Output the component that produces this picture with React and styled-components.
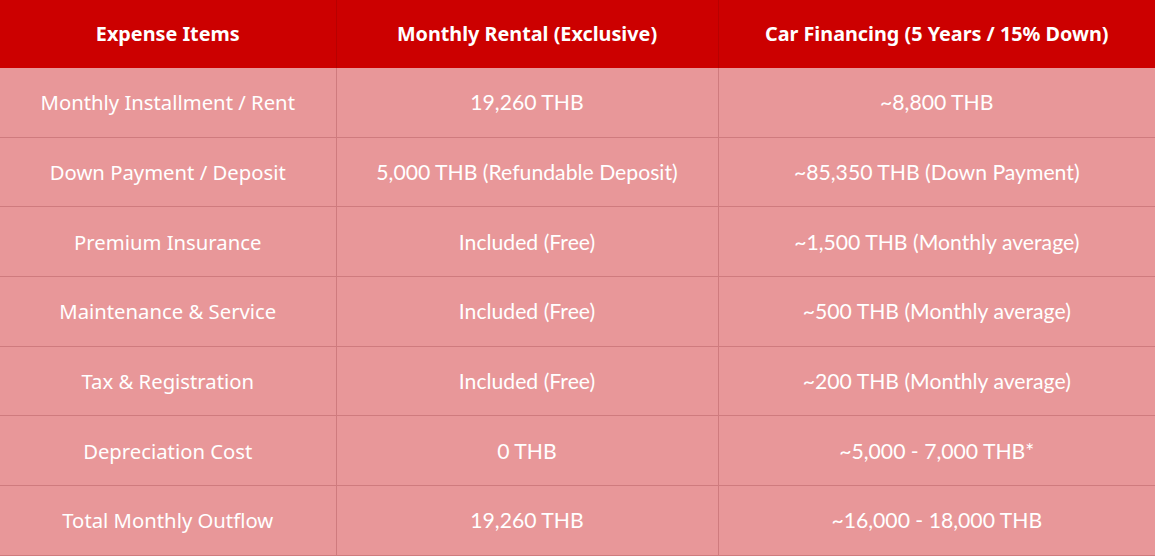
import styled, { createGlobalStyle } from "styled-components";

const GlobalStyle = createGlobalStyle`
  html, body {
    margin: 0;
    padding: 0;
    background: #e89799;
  }
`;

/* Whole comparison table */
const Table = styled.table`
  width: 1155px;
  border-collapse: collapse;
  table-layout: fixed;
  color: #ffffff;
  line-height: 24px;
`;

const Col = styled.col`
  width: ${(p) => p.w}px;
`;

/* Red header cells */
const HeadCell = styled.th`
  height: 68px;
  padding: 0;
  background-color: #cc0000;
  border-right: 1px solid #b80000;
  font-family: "Noto Sans", "Open Sans", sans-serif;
  font-weight: 700;
  font-size: 19.8px;
  text-align: center;
  vertical-align: middle;
  &:last-child {
    border-right: none;
  }
`;

/* Pink body cells */
const Cell = styled.td`
  height: 68.7px;
  padding: 0;
  background-color: #e89799;
  border-right: 1px solid #cf7b7e;
  border-bottom: 1px solid #cf7b7e;
  font-family: ${(p) =>
    p.label ? `"Noto Sans", "Open Sans", sans-serif` : `Lato, "Noto Sans", sans-serif`};
  font-size: ${(p) => (p.label ? "20.3px" : "21.2px")};
  text-align: center;
  vertical-align: middle;
  &:last-child {
    border-right: none;
  }
`;

const rows = [
  ["Monthly Installment / Rent", "19,260 THB", "~8,800 THB"],
  ["Down Payment / Deposit", "5,000 THB (Refundable Deposit)", "~85,350 THB (Down Payment)"],
  ["Premium Insurance", "Included (Free)", "~1,500 THB (Monthly average)"],
  ["Maintenance & Service", "Included (Free)", "~500 THB (Monthly average)"],
  ["Tax & Registration", "Included (Free)", "~200 THB (Monthly average)"],
  ["Depreciation Cost", "0 THB", "~5,000 - 7,000 THB*"],
  ["Total Monthly Outflow", "19,260 THB", "~16,000 - 18,000 THB"],
];

const App = () => {
  return (
    <>
      <GlobalStyle />
      <Table>
        <colgroup>
          <Col w={336} />
          <Col w={382} />
          <Col w={437} />
        </colgroup>
        <thead>
          <tr>
            <HeadCell>Expense Items</HeadCell>
            <HeadCell>Monthly Rental (Exclusive)</HeadCell>
            <HeadCell>Car Financing (5 Years / 15% Down)</HeadCell>
          </tr>
        </thead>
        <tbody>
          {rows.map((r) => (
            <tr key={r[0]}>
              <Cell label>{r[0]}</Cell>
              <Cell>{r[1]}</Cell>
              <Cell>{r[2]}</Cell>
            </tr>
          ))}
        </tbody>
      </Table>
    </>
  );
};

export default App;
